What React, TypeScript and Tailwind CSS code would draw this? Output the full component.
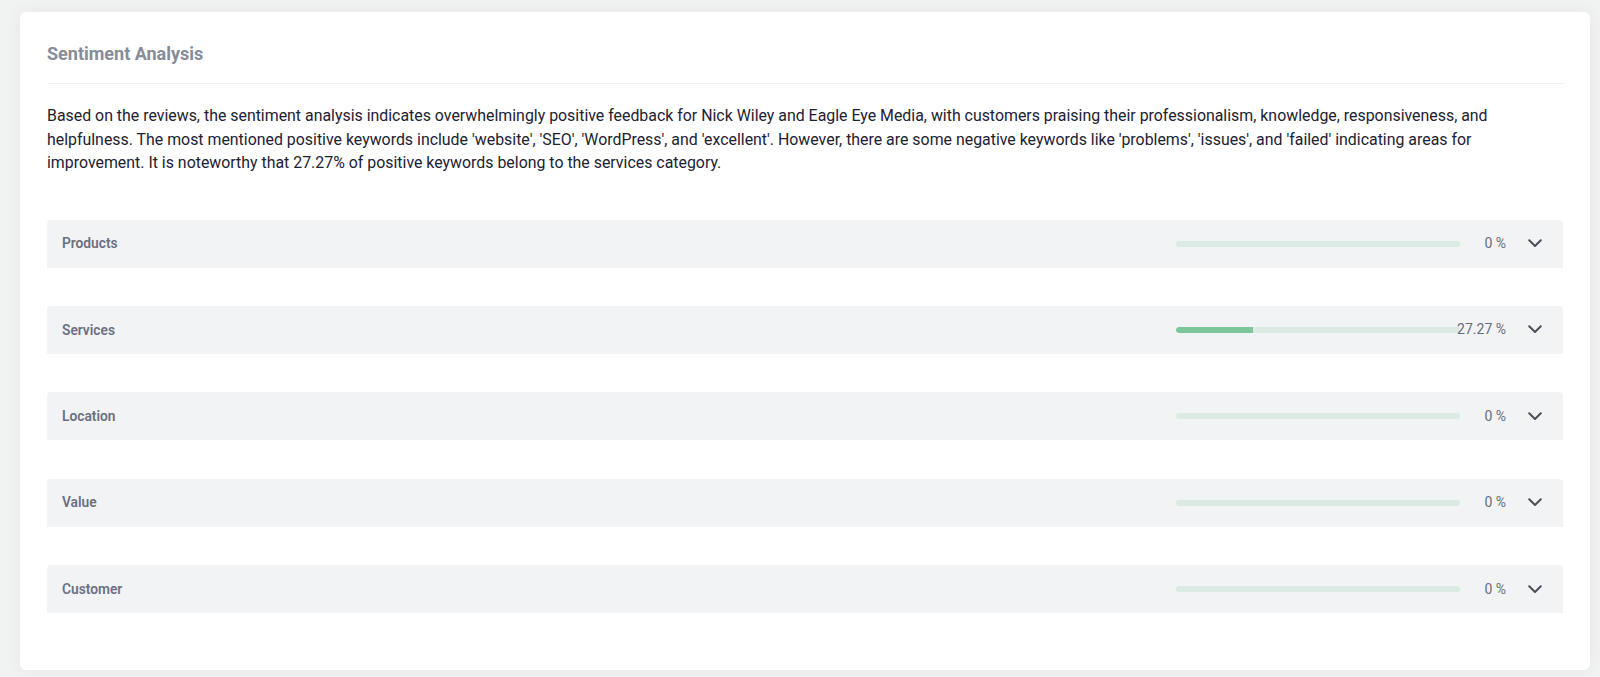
import React from "react";

const rows = [
  { label: "Products", value: 0 },
  { label: "Services", value: 27.27 },
  { label: "Location", value: 0 },
  { label: "Value", value: 0 },
  { label: "Customer", value: 0 },
];

function Chevron() {
  return (
    <svg width="14" height="9" viewBox="0 0 14 9" fill="none">
      <polyline
        points="1.2,1.2 7,7 12.8,1.2"
        stroke="#4b4f58"
        strokeWidth="2"
        strokeLinecap="round"
        strokeLinejoin="round"
      />
    </svg>
  );
}

export default function App() {
  return (
    <div
      className="min-h-screen bg-[#f1f2f2] pt-[12px] pl-[20px] pr-[10px] pb-[7px]"
      style={{ fontFamily: "Roboto, 'Liberation Sans', sans-serif" }}
    >
      <div className="bg-white rounded-[6px] shadow-[0_0_18px_rgba(0,0,0,0.05)] px-[27px] pt-[30px] pb-[57px]">
        <div className="pb-[17px] border-b border-[#eff0f2]">
          <h2 className="text-[18px] leading-[24px] font-bold text-[#878c99]">
            Sentiment Analysis
          </h2>
        </div>
        <p className="mt-[20px] text-[15.9px] leading-[23.5px] text-[#1d2232]">
          Based on the reviews, the sentiment analysis indicates overwhelmingly positive feedback for Nick Wiley and Eagle Eye Media, with customers praising their professionalism, knowledge, responsiveness, and helpfulness. The most mentioned positive keywords include 'website', 'SEO', 'WordPress', and 'excellent'. However, there are some negative keywords like 'problems', 'issues', and 'failed' indicating areas for improvement. It is noteworthy that 27.27% of positive keywords belong to the services category.
        </p>
        <div className="mt-[45px] flex flex-col gap-[38.4px]">
          {rows.map((r) => (
            <div
              key={r.label}
              className="h-[48px] bg-[#f2f3f5] rounded-t-[4px] flex items-center pl-[15px] pr-[21px]"
            >
              <span className="flex-1 text-[13.75px] font-semibold text-[#6b7080]">
                {r.label}
              </span>
              <div className="w-[284px] h-[6px] rounded-full bg-[#dbeae2] overflow-hidden">
                <div
                  className="h-full bg-[#7cc699] rounded-l-full"
                  style={{ width: `${r.value}%` }}
                />
              </div>
              <div className="w-[46px] shrink-0 flex justify-end">
                <span className="whitespace-nowrap text-[14px] text-[#686d7b]">
                  {r.value === 0 ? "0" : r.value.toFixed(2)} %
                </span>
              </div>
              <div className="ml-[22px] flex items-center">
                <Chevron />
              </div>
            </div>
          ))}
        </div>
      </div>
    </div>
  );
}
